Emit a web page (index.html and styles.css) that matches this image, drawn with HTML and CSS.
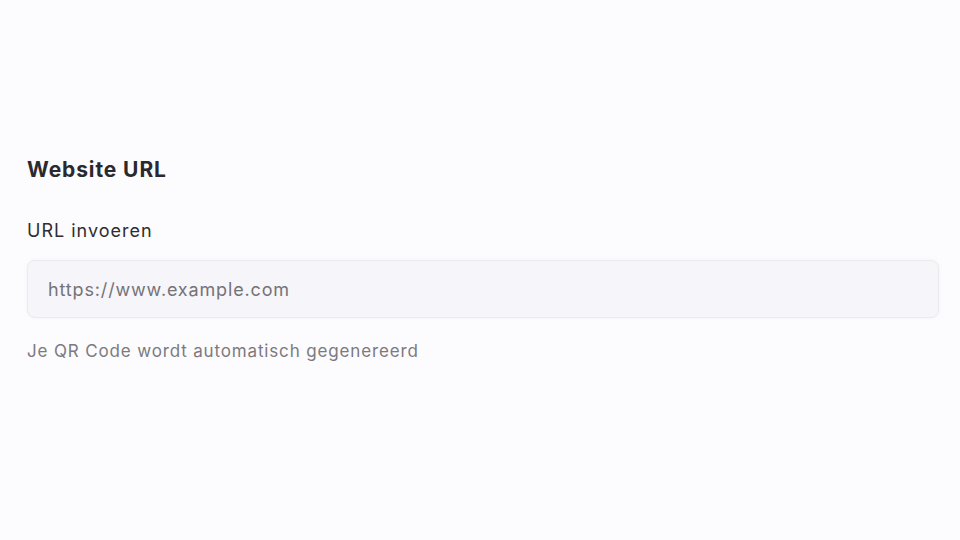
FILE: index.html
```html
<!DOCTYPE html>
<html lang="nl">
<head>
<meta charset="utf-8">
<link rel="stylesheet" href="styles.css">
</head>
<body>
<main class="form">
  <h2 class="title">Website URL</h2>
  <label class="label" for="url">URL invoeren</label>
  <input class="input" id="url" type="text" placeholder="https://www.example.com">
  <p class="help">Je QR Code wordt automatisch gegenereerd</p>
</main>
</body>
</html>
```
FILE: styles.css
```css
html, body {
  margin: 0;
  padding: 0;
  background: #fcfbfd;
}
body {
  width: 960px;
  height: 540px;
  font-family: Inter, "Noto Sans", sans-serif;
  color: #2b2a2e;
}
.form {
  display: flex;
  flex-direction: column;
  padding: 156px 21px 0 27px;
}
.title {
  margin: 0;
  font-size: 21px;
  line-height: 28px;
  font-weight: 700;
  color: #2a292d;
  letter-spacing: 0.9px;
}
.label {
  margin-top: 34px;
  font-size: 18px;
  line-height: 26px;
  color: #2e2d31;
  letter-spacing: 1px;
}
.input {
  margin-top: 16px;
  box-sizing: border-box;
  height: 58px;
  padding: 0 20px;
  border: 1px solid #ebeaf0;
  border-radius: 8px;
  background: #f6f5f9;
  box-shadow: 0 0 4px rgba(40, 30, 70, 0.04);
  font-family: inherit;
  font-size: 18px;
  letter-spacing: 0.85px;
  color: #333;
  outline: none;
}
.input::placeholder {
  color: #747378;
}
.help {
  margin: 21px 0 0;
  font-size: 17px;
  line-height: 24px;
  color: #7b7a7f;
  letter-spacing: 0.85px;
}
```
